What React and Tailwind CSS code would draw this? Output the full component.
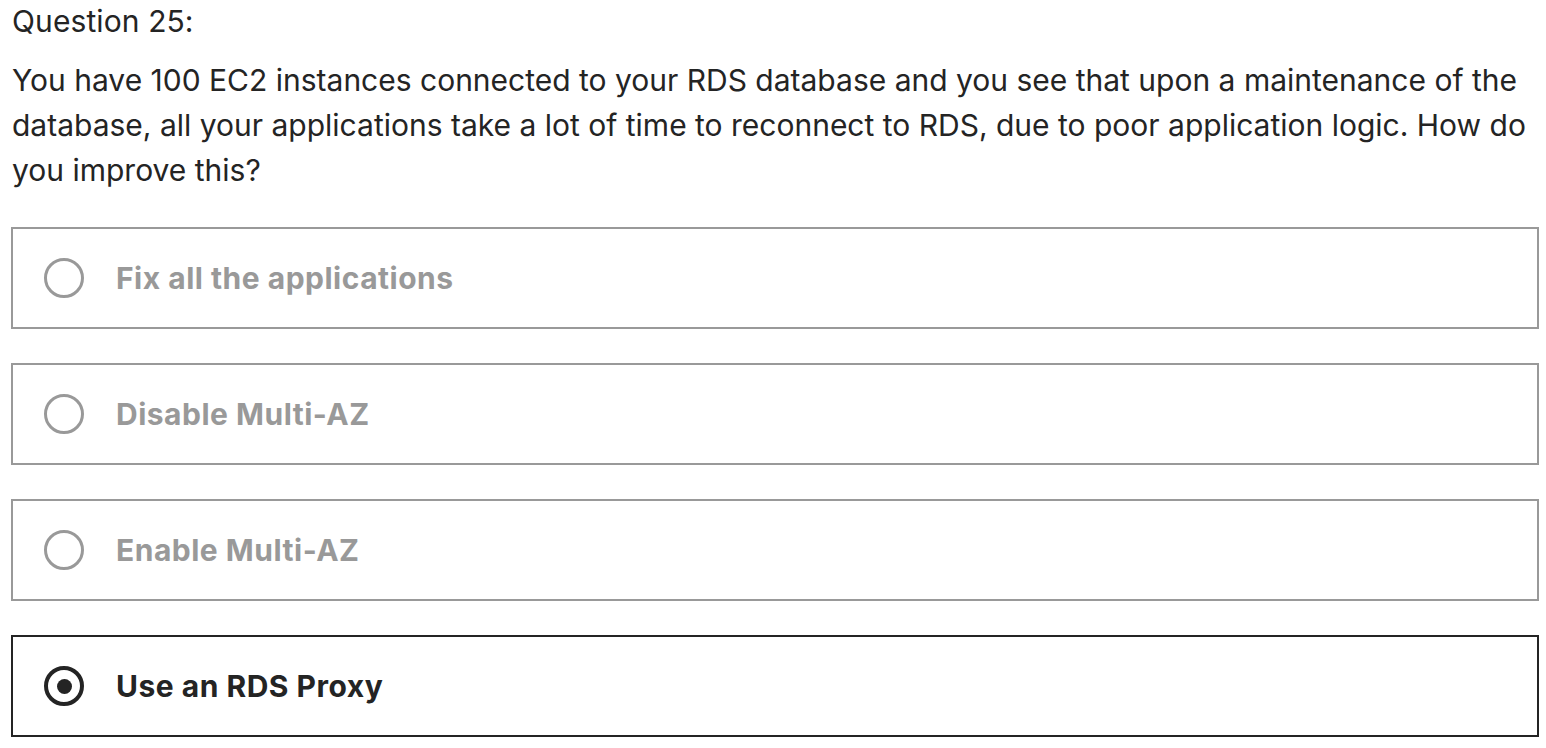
import React from 'react';

const OPTIONS = [
  { id: 'a', label: 'Fix all the applications' },
  { id: 'b', label: 'Disable Multi-AZ' },
  { id: 'c', label: 'Enable Multi-AZ' },
  { id: 'd', label: 'Use an RDS Proxy' },
];

function Radio({ checked }) {
  return (
    <span
      className={`flex items-center justify-center w-[40px] h-[40px] rounded-full shrink-0 ${
        checked ? 'border-[4px] border-[#242424]' : 'border-[3px] border-[#999999]'
      }`}
    >
      {checked && <span className="block w-[15px] h-[15px] rounded-full bg-[#242424]" />}
    </span>
  );
}

export default function App() {
  const selected = 'd';

  return (
    <div className="bg-white w-[1546px] h-[748px] overflow-hidden font-['Inter',sans-serif] text-[#242424]">
      <div className="pl-[12px] pr-[6px] pt-[2px]">
        <p className="text-[30px] leading-[38px] tracking-[0.1px]">Question 25:</p>
        <p className="mt-[18px] text-[30px] leading-[45px] tracking-[0px]">
          You have 100 EC2 instances connected to your RDS database and you see that upon a maintenance of the
          database, all your applications take a lot of time to reconnect to RDS, due to poor application logic. How do
          you improve this?
        </p>
      </div>

      <div className="mt-[34px] ml-[11px] w-[1528px] flex flex-col gap-[34px]">
        {OPTIONS.map((opt) => {
          const checked = opt.id === selected;
          return (
            <label
              key={opt.id}
              className={`flex items-center h-[102px] border-2 pl-[31px] ${
                checked ? 'border-[#242424]' : 'border-[#999999]'
              }`}
            >
              <Radio checked={checked} />
              <span
                className={`ml-[32px] text-[30px] font-bold tracking-[0.5px] ${
                  checked ? 'text-[#242424]' : 'text-[#999999]'
                }`}
              >
                {opt.label}
              </span>
            </label>
          );
        })}
      </div>
    </div>
  );
}
